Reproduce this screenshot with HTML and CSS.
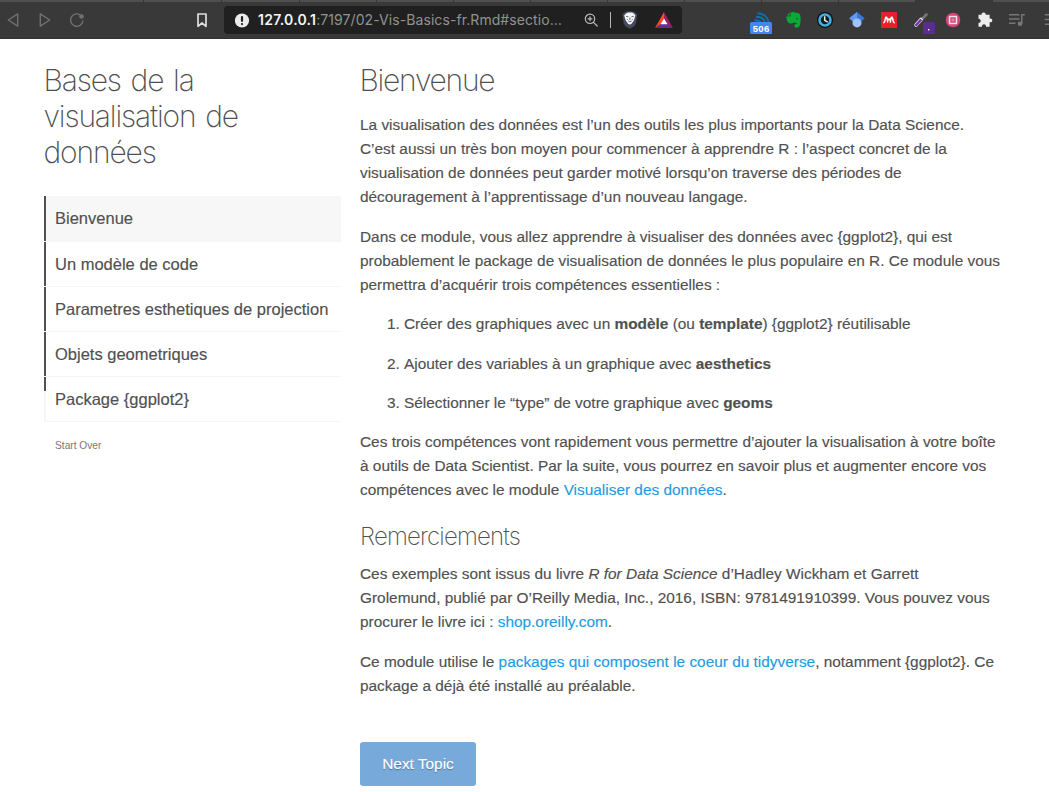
FILE: index.html
```html
<!DOCTYPE html>
<html lang="fr">
<head>
<meta charset="utf-8">
<title>Bases de la visualisation de données</title>
<link rel="stylesheet" href="styles.css">
</head>
<body>
<header class="browser">
  <svg class="tabs" width="1049" height="39" viewBox="0 0 1049 39">
    <path fill="#505050" d="M0 0h915v2H0zM993 0h56v2h-56z"/>
    <path stroke="#353535" d="M143.500 0v2M221.500 0v2M299.500 0v2M376.500 0v2M453.500 0v2M530.500 0v2M607.500 0v2M684.500 0v2M761.500 0v2M838.500 0v2"/>
    <path fill="#303030" d="M0 38h1049v1H0z"/>
    <g fill="none" stroke="#707070" stroke-width="1.400" stroke-linejoin="round" stroke-linecap="round">
      <path d="M17.700 13.800v12.400L8.300 20z"/>
      <path d="M40.300 13.800v12.400l9.400-6.200z"/>
      <path d="M80.300 15a6.200 6.200 0 1 0 2.600 6"/>
    </g>
    <circle cx="81.500" cy="16.500" r="2.300" fill="#707070"/>
    <path fill="none" stroke="#dedede" stroke-width="1.700" stroke-linejoin="round" d="M198 14h8v12.300l-4-3.300-4 3.300z"/>
  </svg>
  <div class="address">
    <svg width="15" height="15" viewBox="0 0 15 15"><circle cx="7" cy="7.500" r="7.100" fill="#ececec"/><path stroke="#202020" stroke-width="2.200" stroke-linecap="round" d="M7 4v3.800M7 11v.1"/></svg>
    <span class="url"><b>127.0.0.1</b>:7197/02-Vis-Basics-fr.Rmd#sectio…</span>
  </div>
  <svg class="icons" width="1049" height="39" viewBox="0 0 1049 39">
    <g fill="none" stroke="#bcbcbc" stroke-width="1.200" stroke-linecap="round"><circle cx="590" cy="18.800" r="4.700"/><path d="M593.500 22.300l3.700 3.700M588 18.800h4M590 16.800v4"/></g>
    <path stroke="#b9b9b9" d="M610.500 12v16"/>
    <path fill="#454a60" d="M625 12.200l2.300-.9h5l2.300.9 2.600 2.100-1.300 9.300-1.700 2.600-4.400 2.600-4.400-2.600-1.700-2.600-1.300-9.300z"/>
    <path fill="#f5f5f5" d="M626 13.500l2-1h4l2 1 1.400 1.900-1.500 5.200-2 2.700-2.100 1.500-2.100-1.500-2-2.700-1.500-5.200z"/>
    <path fill="none" stroke="#454a60" stroke-width=".8" d="M626 16.300l2.400.5M633.800 16.300l-2.400.5M629.900 17.500v2.500M628.200 21l1.700.8 1.700-.8M627 19l.7.800M632.800 19l-.7.800"/>
    <path fill="#ff4724" d="M664 12l-9 16 6-4 3-5z"/>
    <path fill="#9e1f63" d="M664 12l9 16-6-4-3-5z"/>
    <path fill="#662d91" d="M655 28h18l-5.800-4h-6.400z"/>
    <path fill="#fff" d="M664 18.500l3.500 5.700h-7z"/>
    <g fill="none" stroke="#0873b9" stroke-width="1.900"><path d="M757.500 13.200c6 0 10.500 4 11.300 9.300M756 16.700c5 0 8.300 2.300 9 5.800M754.500 20.300c3.500 0 5.500 1 6.500 2.700"/></g>
    <rect x="750" y="22" width="22" height="12" rx="1.500" fill="#4285f4"/>
    <text class="badge-text" x="761" y="32" text-anchor="middle" textLength="16.500">506</text>
    <path fill="#08a936" d="M786.300 16.600l4.300-.3V12.500c1.800-1 4-.7 5 .3 3 .2 4.200.5 4.700 2.800.7 4.400.2 8.200-.8 10.500-.8 1.800-4.800 2.500-5.100.2-.2-2.200 1.500-2.600 3-2.300-.1-.9-2.700-.7-3.200-1.900-.7 1.800-5.100 1.700-6.300.1-1-1.300-1.500-3.800-1.600-5.600z"/>
    <path fill="#08a936" d="M786.800 15.600l3-3v3z"/><circle cx="797" cy="18.600" r=".8" fill="#185b28"/>
    <circle cx="825" cy="20" r="8" fill="#101010"/><circle cx="825" cy="20" r="5.500" fill="#101820" stroke="#43aee0" stroke-width="2.600"/><path fill="none" stroke="#e8e8e8" stroke-width="1.600" d="M824.700 16.200v4.200l3 1.700"/>
    <path fill="#3977df" d="M857 12l7.700 6.200-4 3.800h-7.400l-4-3.800z"/><path fill="#5f9af6" d="M857 12l-7.700 6.200 4 3.800 3.700-3z"/><circle cx="857" cy="22.900" r="4.500" fill="#a0c3ff"/>
    <rect x="881" y="12" width="16" height="16" fill="#e9202c"/>
    <g fill="none" stroke="#fff" stroke-width="1.500" stroke-linecap="round"><path d="M883.800 22.600c1.500-.6.700-2.800 1.900-4.400M894.200 22.600c-1.500-.6-.7-2.800-1.900-4.400M886.800 18.300c1 1 .6 3 .8 3.800M891.200 18.300c-1 1-.6 3-.8 3.800"/></g><g fill="#fff"><circle cx="886.200" cy="17.900" r="1.400"/><circle cx="891.800" cy="17.900" r="1.400"/><circle cx="889" cy="19.400" r="1.200"/></g>
    <path stroke="#777" stroke-width="2.600" stroke-linecap="round" d="M921.500 19.500l5-5"/><path stroke="#e4dce9" stroke-width="3.600" stroke-linecap="round" d="M916 25l5-5.500"/><path stroke="#7334aa" stroke-width="2.400" d="M915.500 25.700l5.700-6.200"/>
    <rect x="923" y="22" width="12" height="12" rx="1.800" fill="#5a2d91"/><rect x="928" y="29" width="1.400" height="1.400" fill="#fff"/>
    <circle cx="953" cy="20" r="7.300" fill="#d4457a"/><rect x="949.500" y="16.500" width="7" height="7" rx=".5" fill="#d4457a" stroke="#f5e2e8" stroke-width="1.500"/><path fill="#e3809f" d="M951.500 18.500h3v3h-3z"/>
    <path fill="#ededed" d="M979 15h3.200c-.8-3 4.600-3 3.900 0h4v3.800c3.600-.7 3.700 4.400 0 3.800V27h-3.500c.2-3.300-4.400-3.300-4.200 0H979v-3.700c3-.1 3-4.200 0-4.300z" transform="translate(-.5 -.3)"/>
    <g fill="none" stroke="#777" stroke-width="1.500"><path d="M1009 14.700h10.500M1009 19h10.500M1009 23.200h6.500M1024.800 14.700h-3v8.700"/></g><circle cx="1020" cy="23.700" r="2.300" fill="#777"/>
    <path fill="none" stroke="#777" stroke-width="1.500" d="M1044.800 14.700h5M1044.800 19.500h5M1044.800 24.300h5"/>
  </svg>
</header>
<div class="page">
  <aside class="sidebar">
    <h1 class="title">Bases de la<br>visualisation de<br>données</h1>
    <nav class="topics">
      <a class="topic current">Bienvenue</a>
      <a class="topic">Un modèle de code</a>
      <a class="topic">Parametres esthetiques de projection</a>
      <a class="topic">Objets geometriques</a>
      <a class="topic partial">Package {ggplot2}</a>
    </nav>
    <a class="restart">Start Over</a>
  </aside>
  <main class="content">
    <h2 class="heading">Bienvenue</h2>
    <p>La visualisation des données est l’un des outils les plus importants pour la Data Science.<br>C’est aussi un très bon moyen pour commencer à apprendre R : l’aspect concret de la<br>visualisation de données peut garder motivé lorsqu’on traverse des périodes de<br>découragement à l’apprentissage d’un nouveau langage.</p>
    <p>Dans ce module, vous allez apprendre à visualiser des données avec {ggplot2}, qui est<br>probablement le package de visualisation de données le plus populaire en R. Ce module vous<br>permettra d’acquérir trois compétences essentielles :</p>
    <ol class="skills">
      <li>Créer des graphiques avec un <b>modèle</b> (ou <b>template</b>) {ggplot2} réutilisable</li>
      <li>Ajouter des variables à un graphique avec <b>aesthetics</b></li>
      <li>Sélectionner le “type” de votre graphique avec <b>geoms</b></li>
    </ol>
    <p>Ces trois compétences vont rapidement vous permettre d’ajouter la visualisation à votre boîte<br>à outils de Data Scientist. Par la suite, vous pourrez en savoir plus et augmenter encore vos<br>compétences avec le module <a>Visualiser des données</a>.</p>
    <h3 class="subheading">Remerciements</h3>
    <p>Ces exemples sont issus du livre <i>R for Data Science</i> d’Hadley Wickham et Garrett<br>Grolemund, publié par O’Reilly Media, Inc., 2016, ISBN: 9781491910399. Vous pouvez vous<br>procurer le livre ici : <a>shop.oreilly.com</a>.</p>
    <p>Ce module utilise le <a>packages qui composent le coeur du tidyverse</a>, notamment {ggplot2}. Ce<br>package a déjà été installé au préalable.</p>
    <button class="next">Next Topic</button>
  </main>
</div>
</body>
</html>
```

FILE: styles.css
```css
* { box-sizing: border-box; }
body { margin: 0; width: 1049px; height: 792px; overflow: hidden; background: #fff; color: #505050; font: 15.400px/24px "Liberation Sans", Arial, sans-serif; }
.browser { position: relative; height: 39px; background: #393939; padding: 6px 0 0 224px; }
.tabs, .icons { position: absolute; left: 0; top: 0; }
.address { position: relative; width: 458px; height: 28px; border-radius: 4px; background: #202020; display: flex; align-items: center; gap: 8px; padding-left: 11px; }
.url { color: #929292; font: 14px/28px Inter, sans-serif; letter-spacing: .08px; white-space: nowrap; }
.url b { color: #f4f4f4; font-weight: 600; letter-spacing: .25px; }
.badge-text { fill: #fff; font: bold 9.5px "Liberation Sans", sans-serif; }
.page { display: grid; grid-template-columns: 297px 660px; column-gap: 19px; padding: 23px 0 0 44px; }
.title, .heading, .subheading { margin: 0; font-family: Inter, sans-serif; font-weight: 200; white-space: nowrap; }
.title, .heading { font-size: 30px; line-height: 36px; letter-spacing: -1.150px; word-spacing: 2.500px; }
.title { margin-left: -.5px; }
.heading { margin-left: -.5px; letter-spacing: -1.250px; }
.topics { margin-top: 26px; }
.topic { display: flex; align-items: center; height: 45px; padding-left: 11px; border-bottom: 1px solid #f5f5f5; background: linear-gradient(#505050, #505050) 0 0 / 2px 100% no-repeat padding-box; color: #505050; font-size: 16.500px; white-space: nowrap; }
.topic.current { height: 46px; padding-bottom: 2px; background-color: #f7f7f7; }
.topic.partial { background: linear-gradient(#505050, #505050) 0 0 / 2px 14px no-repeat, linear-gradient(#f5f5f5, #f5f5f5) 0 0 / 2px 100% no-repeat; }
.restart { display: block; margin: 12px 0 0 11px; font-size: 10.200px; color: #777; }
.content p { margin: 0 0 16px; white-space: nowrap; }
.heading { margin-bottom: 15px; }
.skills { margin: -1px 0 0; padding-left: 44px; white-space: nowrap; }
.skills li { height: 24px; margin-bottom: 15.500px; }
.skills li:last-child { margin-bottom: 15px; }
.subheading { font-size: 24px; line-height: 28px; margin: 21px 0 11px; letter-spacing: -.8px; }
a { color: #1e9be3; }
.content .next { display: block; width: 116px; height: 44px; margin-top: 44px; padding: 0; border: 0; border-radius: 3px; background: #77aadb; color: #fff; font: 15.400px "Liberation Sans", sans-serif; text-shadow: 0 1px 1px #4b7499; }
.content p, .skills, .topic, .next { -webkit-text-stroke: .15px currentColor; }
```
